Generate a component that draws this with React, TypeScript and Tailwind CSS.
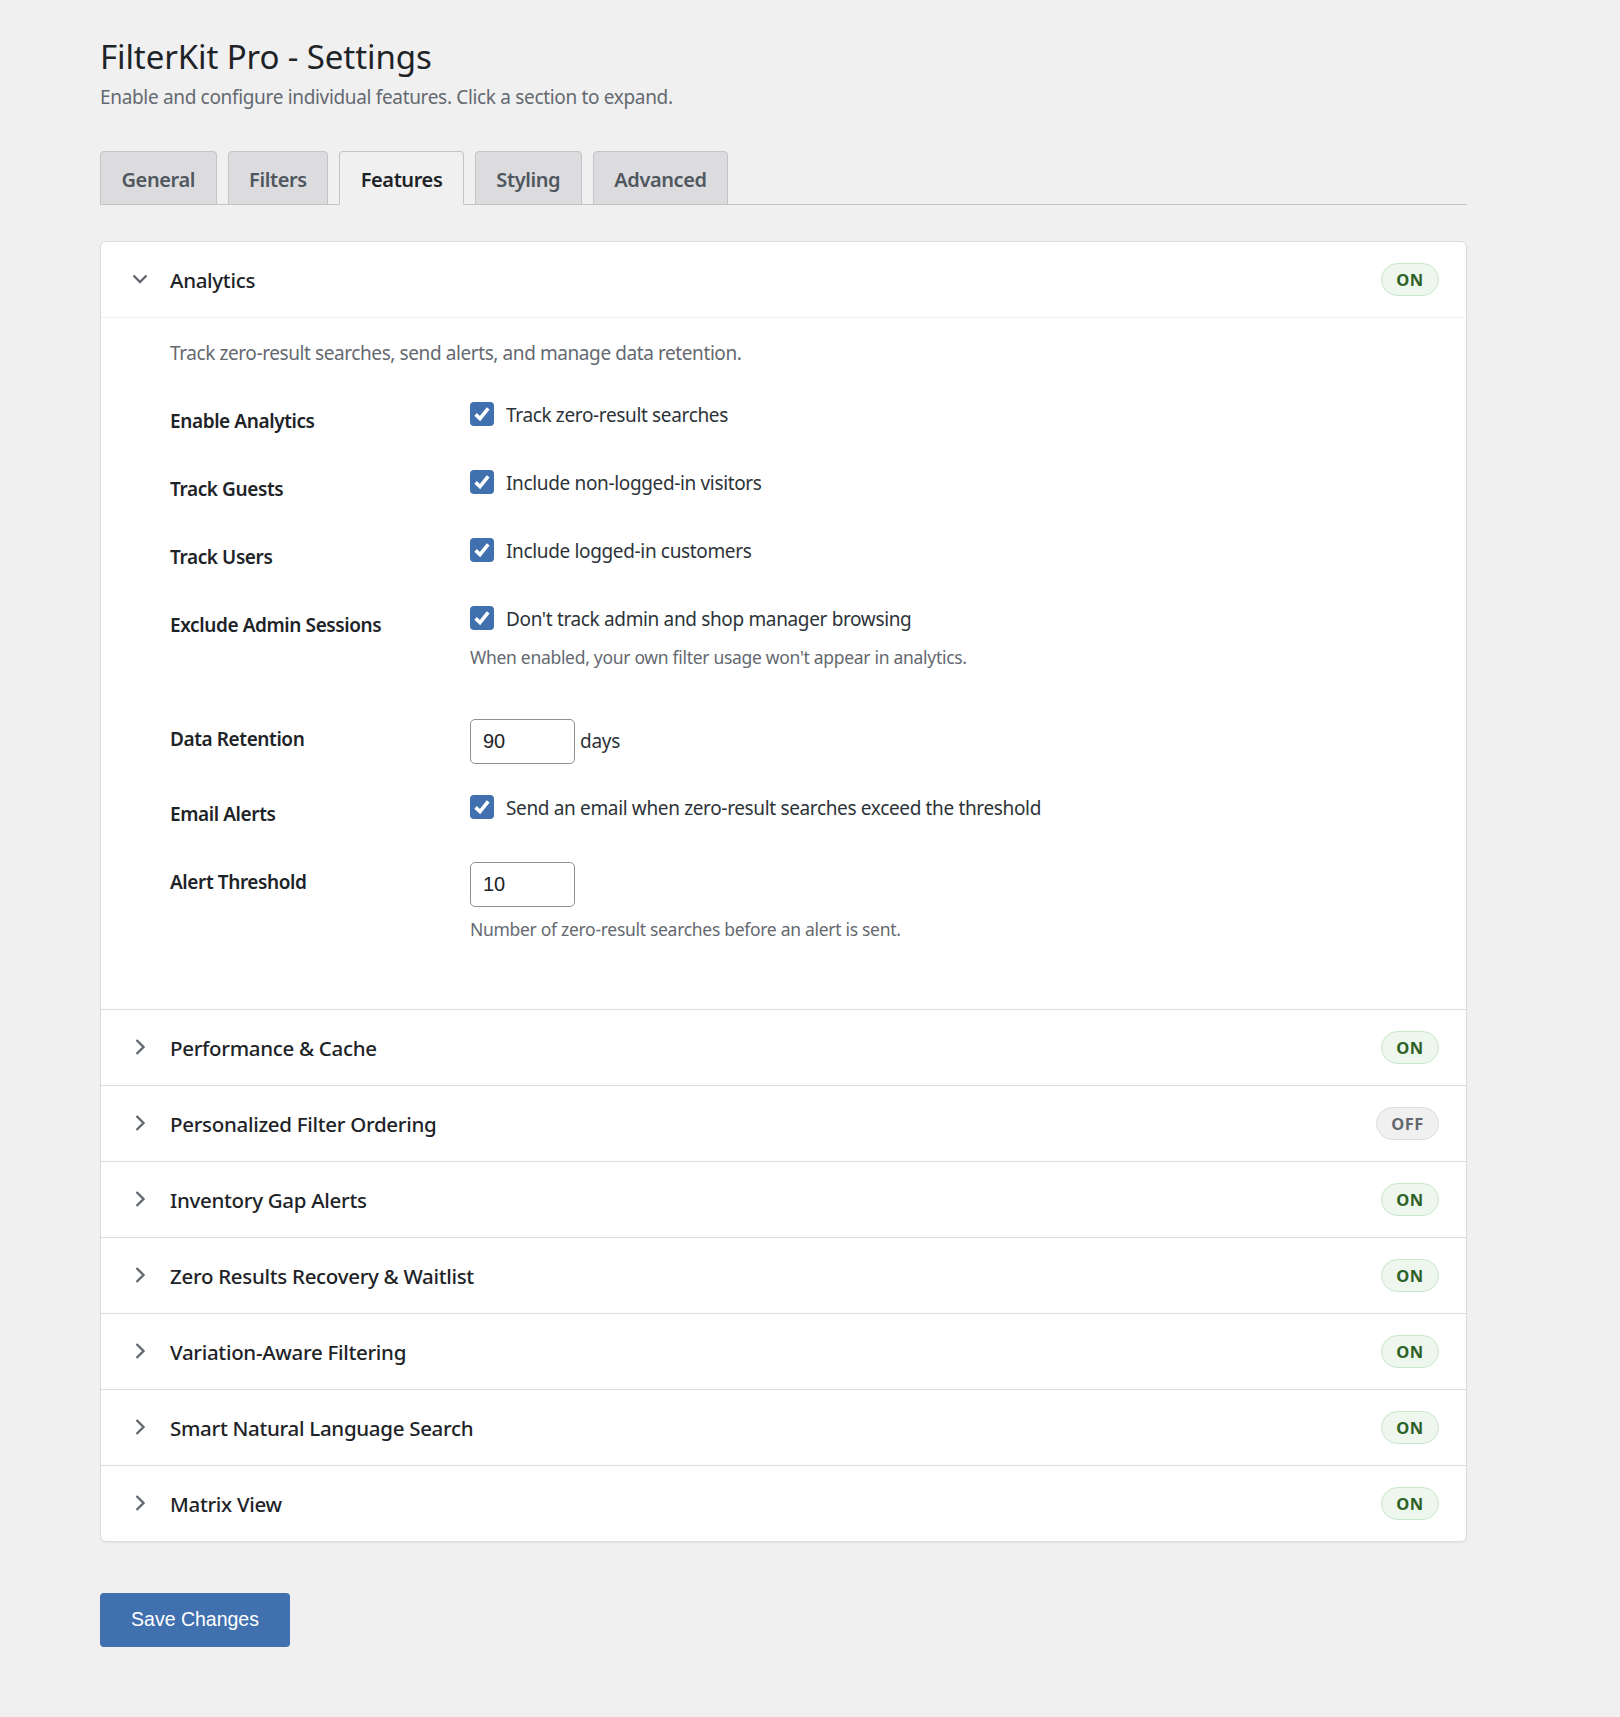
import { ReactNode } from 'react';

const tabs = ['General', 'Filters', 'Features', 'Styling', 'Advanced'];

const sections = [
  { title: 'Performance & Cache', on: true },
  { title: 'Personalized Filter Ordering', on: false },
  { title: 'Inventory Gap Alerts', on: true },
  { title: 'Zero Results Recovery & Waitlist', on: true },
  { title: 'Variation-Aware Filtering', on: true },
  { title: 'Smart Natural Language Search', on: true },
  { title: 'Matrix View', on: true },
];

function Chevron({ open }: { open?: boolean }) {
  return (
    <span className="flex h-[18px] w-[18px] -translate-y-px items-center justify-center">
      <svg width="18" height="18" viewBox="0 0 18 18" fill="none" stroke="#646970" strokeWidth="2.4">
        {open ? <path d="M2.5 5.5 9 12l6.5-6.5" /> : <path d="M5.5 2 12.5 9l-7 7" />}
      </svg>
    </span>
  );
}

function Pill({ on }: { on: boolean }) {
  return on ? (
    <span className="flex h-[33px] w-[58px] items-center justify-center rounded-full border border-[#c8e6c9] bg-[#edf7ed] pt-[1px] text-[16.5px] font-bold tracking-[0.4px] text-[#2e6128]">
      ON
    </span>
  ) : (
    <span className="flex h-[33px] w-[63px] items-center justify-center rounded-full border border-[#dcdcde] bg-[#f0f0f1] pt-[1px] text-[16.5px] font-bold tracking-[0.4px] text-[#646970]">
      OFF
    </span>
  );
}

function Check({ label }: { label: string }) {
  return (
    <div className="flex items-start gap-[12px]">
      <span className="flex h-6 w-6 items-center justify-center rounded-[4px] bg-[#4070ae]">
        <svg width="20" height="20" viewBox="0 0 20 20" fill="none" stroke="#fff" strokeWidth="3.6">
          <path d="M3.6 10.4 8 14.6 16.2 4.4" />
        </svg>
      </span>
      <span className="pt-[1px] text-[19px] leading-6 tracking-[-0.35px] text-[#2c3338]">{label}</span>
    </div>
  );
}

function Row({ label, labelTop, children, pb }: { label: string; labelTop: string; children: ReactNode; pb: string }) {
  return (
    <div className={`flex ${pb}`}>
      <div className={`w-[300px] shrink-0 text-[19px] leading-6 font-semibold tracking-[-0.4px] text-[#1d2327] ${labelTop}`}>{label}</div>
      <div>{children}</div>
    </div>
  );
}

function NumberBox({ value }: { value: string }) {
  return (
    <span className="flex h-[45px] w-[105px] items-center rounded-[5px] border border-[#8c8f94] bg-white pb-[2px] pl-[12px] font-['Liberation_Sans',sans-serif] text-[20px] text-[#1d2327]">
      {value}
    </span>
  );
}

function Hint({ children }: { children: ReactNode }) {
  return <p className="text-[17.5px] leading-6 tracking-[-0.3px] text-[#646970]">{children}</p>;
}

export default function App() {
  return (
    <div className="min-h-[1717px] bg-[#f0f0f1] px-[100px] pt-[35px] font-['Noto_Sans',sans-serif]">
      <div className="w-[1367px]">
        <h1 className="text-[33px] leading-[44px] tracking-[-0.1px] text-[#1d2327]">FilterKit Pro - Settings</h1>
        <p className="mt-[6px] text-[19px] leading-6 tracking-[-0.33px] text-[#646970]">
          Enable and configure individual features. Click a section to expand.
        </p>

        {/* Tabs */}
        <div className="mt-[42px] flex h-[54px] gap-[11px] border-b border-[#c3c4c7]">
          {tabs.map((t) => (
            <div
              key={t}
              className={`flex h-[54px] items-center rounded-t-[4px] border border-[#c3c4c7] px-[20.5px] pt-[4px] text-[20px] font-semibold tracking-[-0.4px] ${
                t === 'Features' ? 'border-b-[#f0f0f1] bg-[#f0f0f1] text-[#1d2327]' : 'bg-[#dcdcde] text-[#50575e]'
              }`}
            >
              {t}
            </div>
          ))}
        </div>

        {/* Feature list */}
        <div className="mt-[36px] rounded-[6px] border border-[#dcdcde] bg-white shadow-[0_1px_2px_rgba(0,0,0,0.06)]">
          <div className="flex h-[76px] items-center border-b border-[#f0f0f1] pr-[27px] pl-[30px]">
            <Chevron open />
            <span className="ml-[21px] flex-1 pt-[2px] text-[20.5px] font-medium tracking-[-0.3px] text-[#1d2327]">Analytics</span>
            <Pill on />
          </div>

          <div className="h-[692px] border-b border-[#dcdcde] pl-[69px]">
            <p className="pt-[23px] text-[19px] leading-6 tracking-[-0.41px] text-[#646970]">
              Track zero-result searches, send alerts, and manage data retention.
            </p>
            <div className="mt-[37px]">
              <Row label="Enable Analytics" labelTop="pt-[7px]" pb="pb-[37px]">
                <Check label="Track zero-result searches" />
              </Row>
              <Row label="Track Guests" labelTop="pt-[7px]" pb="pb-[37px]">
                <Check label="Include non-logged-in visitors" />
              </Row>
              <Row label="Track Users" labelTop="pt-[7px]" pb="pb-[37px]">
                <Check label="Include logged-in customers" />
              </Row>
              <Row label="Exclude Admin Sessions" labelTop="pt-[7px]" pb="pb-[50px]">
                <Check label="Don't track admin and shop manager browsing" />
                <div className="mt-[14px]">
                  <Hint>When enabled, your own filter usage won't appear in analytics.</Hint>
                </div>
              </Row>
              <Row label="Data Retention" labelTop="pt-[8px]" pb="pb-[31px]">
                <div className="flex items-center gap-[5px]">
                  <NumberBox value="90" />
                  <span className="text-[19px] tracking-[-0.3px] text-[#2c3338]">days</span>
                </div>
              </Row>
              <Row label="Email Alerts" labelTop="pt-[7px]" pb="pb-[36px]">
                <Check label="Send an email when zero-result searches exceed the threshold" />
              </Row>
              <Row label="Alert Threshold" labelTop="pt-[8px]" pb="pb-0">
                <NumberBox value="10" />
                <div className="mt-[10px]">
                  <Hint>Number of zero-result searches before an alert is sent.</Hint>
                </div>
              </Row>
            </div>
          </div>

          {sections.map((s, i) => (
            <div
              key={s.title}
              className={`flex items-center pr-[27px] pl-[30px] ${i < sections.length - 1 ? 'h-[76px] border-b border-[#dcdcde]' : 'h-[75px]'}`}
            >
              <Chevron />
              <span className="ml-[21px] flex-1 pt-[2px] text-[20.5px] font-medium tracking-[-0.3px] text-[#1d2327]">{s.title}</span>
              <Pill on={s.on} />
            </div>
          ))}
        </div>

        <button
          type="button"
          className="mt-[51px] h-[54px] w-[190px] rounded-[4px] bg-[#4070ae] font-['Liberation_Sans',sans-serif] text-[19.5px] text-white"
        >
          Save Changes
        </button>
      </div>
    </div>
  );
}
